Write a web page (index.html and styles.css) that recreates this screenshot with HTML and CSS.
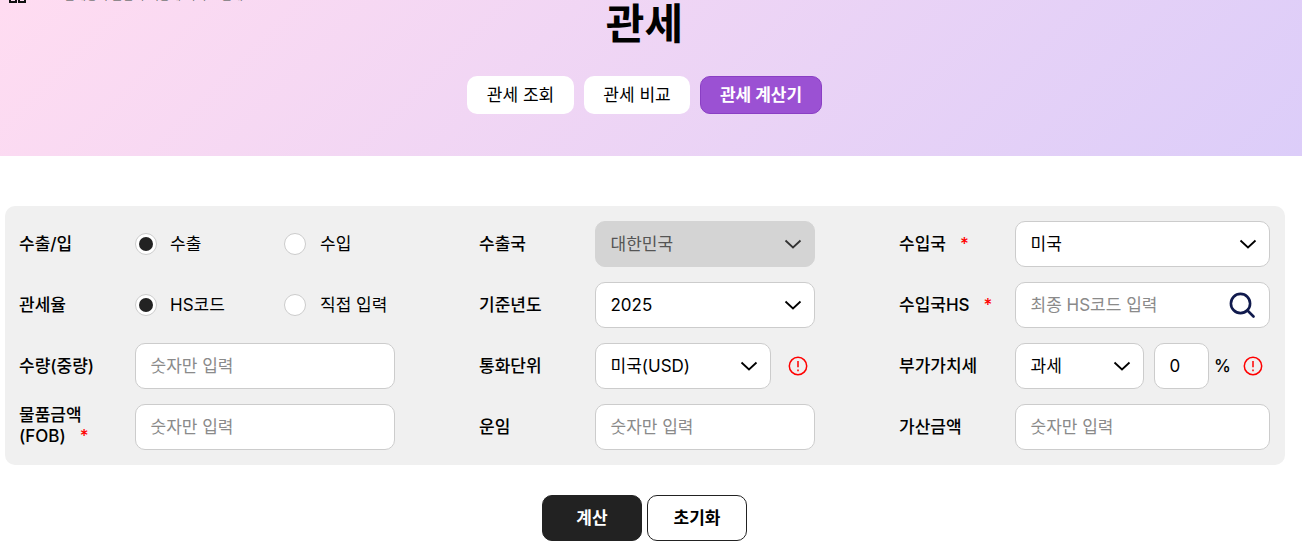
FILE: index.html
```html
<!DOCTYPE html>
<html lang="ko">
<head>
<meta charset="utf-8">
<title>관세</title>
<link rel="stylesheet" href="styles.css">
</head>
<body>
<header class="hero">
  <div class="crumbs" aria-hidden="true">
    <span class="crumb-icons"><i></i><i></i></span>
    <span class="crumb-text">관세청 수출입 무역통계 서비스 안내</span>
  </div>
  <h1 class="title">관세</h1>
  <nav class="tabs">
    <button class="tab">관세 조회</button>
    <button class="tab">관세 비교</button>
    <button class="tab tab-active">관세 계산기</button>
  </nav>
</header>
<main class="main">
  <form class="panel">
    <div class="label">수출/입</div>
    <div class="radios">
      <label class="radio"><span class="dot dot-on"></span><span class="val">수출</span></label>
      <label class="radio"><span class="dot"></span><span class="val">수입</span></label>
    </div>
    <div class="label">수출국</div>
    <div class="select select-off"><span class="val">대한민국</span><svg class="chev" viewBox="0 0 18 10"><path d="M1.5 1.5 9 8.5l7.5-7"/></svg></div>
    <div class="label">수입국<span class="req">*</span></div>
    <div class="select"><span class="val">미국</span><svg class="chev" viewBox="0 0 18 10"><path d="M1.5 1.5 9 8.5l7.5-7"/></svg></div>

    <div class="label">관세율</div>
    <div class="radios">
      <label class="radio"><span class="dot dot-on"></span><span class="val">HS코드</span></label>
      <label class="radio"><span class="dot"></span><span class="val">직접 입력</span></label>
    </div>
    <div class="label">기준년도</div>
    <div class="select"><span class="val">2025</span><svg class="chev" viewBox="0 0 18 10"><path d="M1.5 1.5 9 8.5l7.5-7"/></svg></div>
    <div class="label">수입국HS<span class="req">*</span></div>
    <div class="select"><span class="val ph">최종 HS코드 입력</span><svg class="search" viewBox="0 0 26 26"><circle cx="11.5" cy="11.5" r="9.6"/><path d="m18.5 18.5 6 6"/></svg></div>

    <div class="label">수량(중량)</div>
    <div class="select"><span class="val ph">숫자만 입력</span></div>
    <div class="label">통화단위</div>
    <div class="combo">
      <div class="select grow"><span class="val">미국(USD)</span><svg class="chev" viewBox="0 0 18 10"><path d="M1.5 1.5 9 8.5l7.5-7"/></svg></div>
      <svg class="alert" viewBox="0 0 20 20"><circle cx="10" cy="10" r="8.7"/><path d="M10 5v6.2"/><path d="M10 13.4v1.8"/></svg>
    </div>
    <div class="label">부가가치세</div>
    <div class="combo">
      <div class="select vat"><span class="val">과세</span><svg class="chev" viewBox="0 0 18 10"><path d="M1.5 1.5 9 8.5l7.5-7"/></svg></div>
      <div class="select rate"><span class="val">0</span></div>
      <span class="pct">%</span>
      <svg class="alert alert-near" viewBox="0 0 20 20"><circle cx="10" cy="10" r="8.7"/><path d="M10 5v6.2"/><path d="M10 13.4v1.8"/></svg>
    </div>

    <div class="label label-two">물품금액<br>(FOB)<span class="req">*</span></div>
    <div class="select"><span class="val ph">숫자만 입력</span></div>
    <div class="label">운임</div>
    <div class="select"><span class="val ph">숫자만 입력</span></div>
    <div class="label">가산금액</div>
    <div class="select"><span class="val ph">숫자만 입력</span></div>
  </form>
  <div class="actions">
    <button class="btn btn-dark" type="button">계산</button>
    <button class="btn" type="button">초기화</button>
  </div>
</main>
</body>
</html>
```
FILE: styles.css
```css
* { box-sizing: border-box; }
html, body { margin: 0; padding: 0; }
body {
  width: 1302px;
  height: 559px;
  overflow: hidden;
  background: #fff;
  color: #000;
  font-family: Inter, "Noto Sans CJK KR", sans-serif;
  font-size: 17px;
}
.hero {
  position: relative;
  height: 156px;
  padding-right: 13px;
  display: flex;
  flex-direction: column;
  align-items: center;
  background: linear-gradient(135deg, #ffdcf1 0%, #dccdf9 100%);
}
.crumbs {
  position: absolute;
  left: 9px;
  top: -14px;
  display: flex;
  align-items: flex-end;
  height: 17px;
}
.crumb-icons { display: flex; gap: 1px; }
.crumb-icons i {
  display: block;
  width: 8px;
  height: 8px;
  border: 2px solid #111;
}
.crumb-text {
  margin-left: 38px;
  font-size: 12px;
  line-height: 15px;
  color: #777;
  white-space: nowrap;
}
.title {
  margin: 0;
  height: 76px;
  font-size: 42px;
  font-weight: 700;
  line-height: 48px;
}
.tabs { display: flex; gap: 10px; }
.tab {
  width: 107px;
  height: 38px;
  padding: 0;
  border: 0;
  border-radius: 10px;
  background: #fff;
  color: #000;
  font: 400 17px/21px Inter, "Noto Sans CJK KR", sans-serif;
}
.tab + .tab { width: 106px; }
.tabs .tab-active {
  width: 122px;
  background: #9b51d3;
  border: 1px solid #8a3fc4;
  color: #fff;
  font-weight: 700;
}
.main { padding: 50px 17px 0 5px; }
.panel {
  display: grid;
  grid-template-columns: 116px 260px 200px 220px 200px 255px;
  row-gap: 15px;
  align-items: center;
  padding: 15px 15px 15px 14px;
  background: #f0f0f0;
  border-radius: 10px;
}
.label {
  font-weight: 500;
  line-height: 21px;
  white-space: nowrap;
}
.label:nth-child(6n+3), .label:nth-child(6n+5) { padding-left: 84px; }
.label-two { margin-top: -2px; }
.req { color: #f00; margin-left: 14px; }
.val { line-height: 21px; }
.radios { display: flex; height: 46px; align-items: center; }
.radio {
  display: flex;
  align-items: center;
  flex: none;
  width: 149px;
  gap: 13px;
}
.radio + .radio { gap: 14px; }
.dot {
  width: 22px;
  height: 22px;
  border-radius: 50%;
  background: #fff;
  border: 1px solid #ccc;
  position: relative;
  flex: none;
}
.dot-on::after {
  content: "";
  position: absolute;
  inset: 3px;
  border-radius: 50%;
  background: #222;
}
.select {
  height: 46px;
  display: flex;
  align-items: center;
  justify-content: space-between;
  padding: 0 12px 0 14.5px;
  border: 1px solid #ccc;
  border-radius: 10px;
  background: #fff;
}
.select-off { background: #d4d4d4; border-color: #d4d4d4; color: #555; }
.select-off .chev { stroke: #333; }
.ph { color: #8a8a8a; }
.chev { width: 18px; height: 10px; fill: none; stroke: #000; stroke-width: 1.8; }
.search { width: 26px; height: 26px; margin-right: 2px; fill: none; stroke: #101a4d; stroke-width: 2.6; stroke-linecap: round; }
.combo { display: flex; align-items: center; }
.grow { width: 176px; flex: none; }
.alert { width: 20px; height: 20px; margin-left: 17px; fill: none; stroke: #f00; stroke-width: 1.5; }
.vat { width: 129px; flex: none; }
.rate { width: 55px; margin-left: 10px; flex: none; }
.pct { margin-left: 5px; font-weight: 500; }
.alert-near { margin-left: 12px; }
.actions { display: flex; justify-content: center; gap: 5px; margin: 30px 1px 0 0; }
.btn {
  width: 100px;
  height: 46px;
  padding: 0;
  border: 1px solid #222;
  border-radius: 10px;
  background: #fff;
  color: #000;
  font: 700 17px/21px Inter, "Noto Sans CJK KR", sans-serif;
}
.btn-dark { background: #222; color: #fff; }
```
